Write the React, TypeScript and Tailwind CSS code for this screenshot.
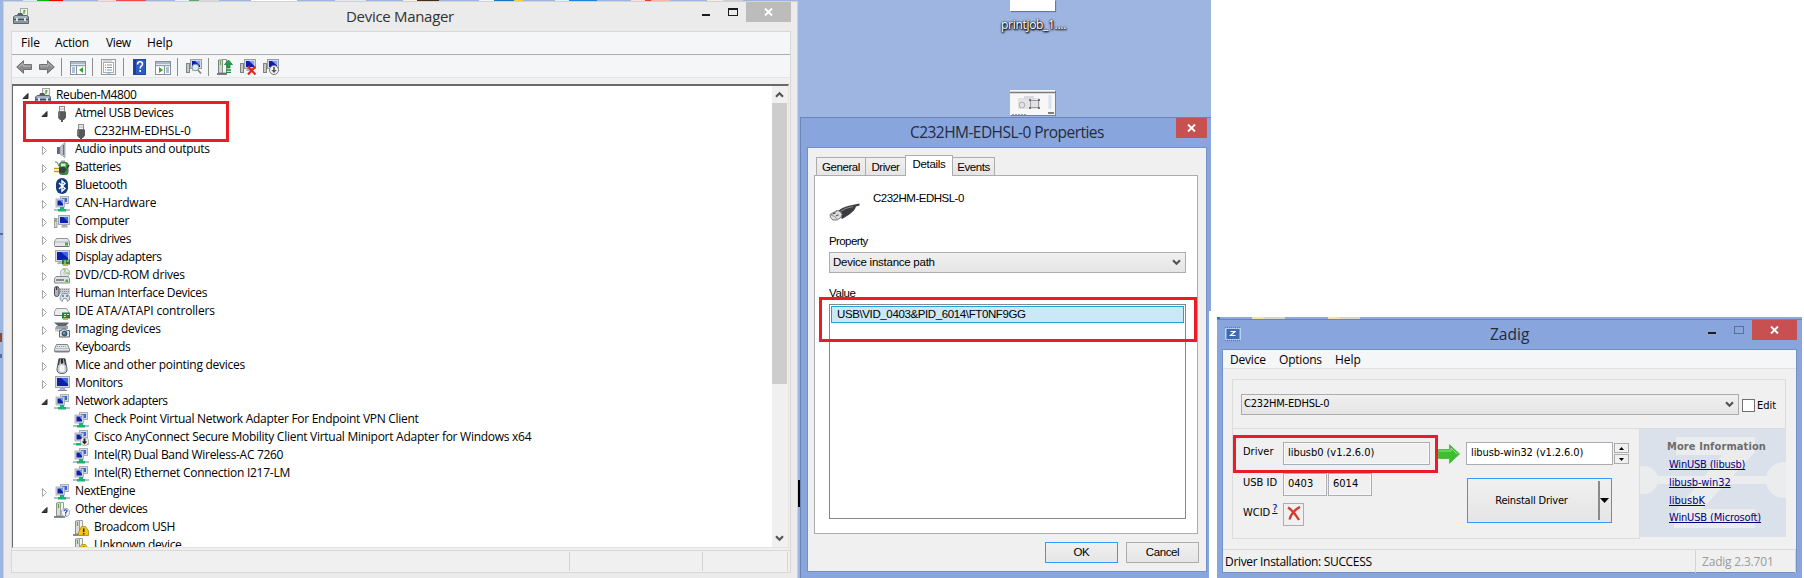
import React from "react";

const segoe = "font-['Open_Sans','Noto_Sans',sans-serif]";
const msSans = "font-['Liberation_Sans',Arial,sans-serif]";
const tahoma = "font-['DejaVu_Sans_Condensed','DejaVu_Sans',sans-serif] [font-stretch:condensed]";

type IconProps = { className?: string };

function Svg({ children, size = 16, className = "" }: { children: React.ReactNode; size?: number; className?: string }) {
  return (
    <svg width={size} height={size} viewBox="0 0 16 16" className={`shrink-0 ${className}`}>
      {children}
    </svg>
  );
}

const ComputerBoxIcon = ({ className }: IconProps) => (
  <Svg className={className}>
    <rect x="7.500" y="0.500" width="7" height="8" fill="#eef0ee" stroke="#a3a8a6" />
    <path d="M11 2v4M11 2.200l1.400 1.400" stroke="#5bb03f" strokeWidth="1.400" />
    <path d="M5 5h4l2 3H4z" fill="#555c62" />
    <path d="M0.500 9l1.500-1.500h12L15.500 9v6.500h-15z" fill="#8c98a2" stroke="#5c666e" />
    <path d="M1 11.500h14" stroke="#434b52" />
    <path d="M2 9h12" stroke="#c4ccd2" />
    <rect x="3" y="10" width="2" height="3" fill="#dfe4e8" />
    <rect x="11" y="10" width="2" height="3" fill="#dfe4e8" />
  </Svg>
);

const UsbPlugIcon = () => (
  <Svg>
    <rect x="5.500" y="0.500" width="5" height="5" fill="#f2f2f2" stroke="#8b8b8b" />
    <path d="M7 2v2M9 2v2" stroke="#b5b5b5" />
    <path d="M4 5.500h8v6l-2 2.500h-1v2h-2v-2h-1l-2-2.500z" fill="#58595b" />
    <path d="M5 6v5" stroke="#8e8f91" />
  </Svg>
);

const SpeakerIcon = () => (
  <Svg>
    <rect x="3" y="5" width="3" height="7" fill="#5f6973" />
    <path d="M6 5l5-4.500v15L6 12z" fill="#c3c9ce" stroke="#8a9299" strokeWidth=".7" />
    <path d="M9.500 3v10" stroke="#6b757e" strokeWidth="1.300" />
  </Svg>
);

const BatteryIcon = () => (
  <Svg>
    <rect x="7" y="0.500" width="4" height="2" fill="#9aa39a" />
    <rect x="5.500" y="2.500" width="8.500" height="12" rx="2" fill="#2fa43a" stroke="#4f6b50" />
    <rect x="7" y="3.500" width="4.500" height="3" fill="#d5f3d0" />
    <path d="M1 2q3-.5 3 2t2 3" stroke="#777" fill="none" />
    <path d="M5 7.500l5-1 3 3-3 4-5-1z" fill="#3c4043" />
    <path d="M0 8.500h5M0 11.500h5" stroke="#c49a1a" strokeWidth="1.500" />
    <path d="M13 8l2-3" stroke="#3c4043" strokeWidth="1.500" />
  </Svg>
);

const BluetoothIcon = () => (
  <Svg>
    <rect x="2" y="0" width="12" height="16" rx="6" fill="#123d7c" />
    <path d="M5 5l6 5.500-3 2.700V2.800l3 2.700-6 5.500" stroke="#fff" strokeWidth="1.400" fill="none" />
  </Svg>
);

function Screens() {
  return (
    <>
      <rect x="6.500" y="0.500" width="8" height="7" fill="#d9dde3" stroke="#a9adb5" />
      <rect x="8" y="2" width="5" height="4" fill="#3468e0" />
      <rect x="2" y="3" width="8.500" height="8" fill="#d5d9df" stroke="#a0a4ac" strokeWidth=".8" />
      <rect x="3.500" y="4.500" width="5.500" height="5" fill="#0d1ea8" />
      <path d="M6 4.500h3v3.500z" fill="#6a9cff" />
    </>
  );
}

const NetworkIcon = () => (
  <Svg>
    <Screens />
    <path d="M0 14h16" stroke="#b4bdc0" strokeWidth="2" />
    <path d="M6 11h4v2h2v2.500H4V13h2z" fill="#17b573" />
  </Svg>
);

const NetworkDisabledIcon = () => (
  <Svg>
    <Screens />
    <path d="M0 14h16" stroke="#b4bdc0" strokeWidth="2" />
    <path d="M3 13h5v2.500H3z" fill="#17b573" />
    <circle cx="11.500" cy="11.500" r="4.200" fill="#eee" stroke="#999" strokeWidth=".7" />
    <path d="M10.500 8.500h2v3h1.800l-2.800 3-2.800-3h1.800z" fill="#222" />
  </Svg>
);

function Monitor() {
  return (
    <>
      <rect x="1.500" y="0.500" width="14" height="11" fill="#d4d7dc" stroke="#a6a9af" />
      <rect x="3" y="2" width="11" height="8" fill="#0c1fb0" />
      <path d="M7 2h7v6z" fill="#3c6bea" />
    </>
  );
}

const MonitorIcon = () => (
  <Svg>
    <Monitor />
    <path d="M6 12h5l1 2.500H5z" fill="#b3b6bb" />
    <path d="M4 14.500h9" stroke="#8b8f95" />
  </Svg>
);

const ComputerIcon = () => (
  <Svg>
    <rect x="4.500" y="1.500" width="11" height="9" fill="#d4d7dc" stroke="#a6a9af" />
    <rect x="6" y="3" width="8" height="6" fill="#0c1fb0" />
    <path d="M9 3h5v4.500z" fill="#3c6bea" />
    <path d="M8 11h5l1 2.500H7z" fill="#a9adb3" />
    <rect x="0.500" y="4.500" width="2.500" height="9" fill="#d5dbd5" stroke="#878b8b" strokeWidth=".8" />
    <rect x="1" y="5.500" width="1.500" height="2" fill="#58b234" />
  </Svg>
);

const DiskIcon = () => (
  <Svg>
    <path d="M2.500 6.500h11l2 3v4q0 1-1 1h-13q-1 0-1-1v-4z" fill="#e6e7e9" stroke="#909397" />
    <path d="M1 10h14" stroke="#b5b7bb" />
    <path d="M1 14.500h14" stroke="#6e7175" />
    <rect x="11" y="10.500" width="3" height="3" fill="#44b02c" />
  </Svg>
);

const DisplayIcon = () => (
  <Svg>
    <Monitor />
    <path d="M4 12h4v2H3z" fill="#b3b6bb" />
    <rect x="8" y="9.500" width="8" height="5" fill="#21803c" />
    <path d="M10 11h2M13 11h2M10 13h2" stroke="#cfe9cf" />
    <rect x="9" y="14.500" width="5" height="1.500" fill="#dcae24" />
  </Svg>
);

const DvdIcon = () => (
  <Svg>
    <circle cx="11" cy="5" r="4.700" fill="#e3e8e8" stroke="#a0a5a8" strokeWidth=".8" />
    <path d="M11 5l-2-4h3zM11 5l4 2v-3z" fill="#9dd08e" />
    <circle cx="11" cy="5" r="1.200" fill="#fff" stroke="#999" strokeWidth=".6" />
    <path d="M2 8.500h12l1.500 2v4.500h-15v-4.500z" fill="#e0e1e3" stroke="#85888c" />
    <path d="M2 12h8" stroke="#4a4d50" strokeWidth="1.200" />
    <rect x="11.500" y="11.500" width="2.500" height="2.500" fill="#44b02c" />
  </Svg>
);

const HidIcon = () => (
  <Svg>
    <rect x="5" y="2" width="11" height="6" fill="#c9cdd2" />
    <path d="M6 3.500h9M6 5.500h9" stroke="#8b9098" strokeDasharray="1 1" />
    <rect x="0.500" y="0.500" width="4.500" height="10" rx="2.200" fill="#aeb3b8" stroke="#454a50" />
    <path d="M2.700 1v3" stroke="#222" />
    <path d="M6 13q0-6 5-5.500 5-.5 4.500 6.500l-2 1.500-1-3h-3l-1.500 3z" fill="#dfe3e8" stroke="#7d848b" strokeWidth=".8" />
    <circle cx="9" cy="10" r="1" fill="#2a7fc0" />
    <circle cx="13" cy="10" r="1" fill="#2a7fc0" />
  </Svg>
);

const IdeIcon = () => (
  <Svg>
    <path d="M2.500 4.500h10l2 3v4h-14v-4z" fill="#ececee" stroke="#9a9da1" />
    <path d="M1 11.500h8" stroke="#6e7175" />
    <rect x="8" y="8.500" width="8" height="6" fill="#21803c" />
    <path d="M10 10.500h2M13 10.500h2M10 12.500h2" stroke="#cfe9cf" />
    <rect x="9" y="14.500" width="5" height="1.500" fill="#dcae24" />
  </Svg>
);

const ImagingIcon = () => (
  <Svg>
    <path d="M0 0.500h15l-3 3.500H4z" fill="#5e666c" />
    <path d="M2 4h12v3H1z" fill="#9ba4aa" />
    <rect x="1" y="7" width="7" height="2.500" fill="#c6cbd0" />
    <path d="M5.500 8.500h2l1-1.500h3l1 1.500h3v6.500h-10z" fill="#dfe2e5" stroke="#60666c" />
    <circle cx="10.500" cy="11.500" r="2.500" fill="#2e6ca4" stroke="#333" strokeWidth=".7" />
    <circle cx="10" cy="11" r=".8" fill="#cfe6ff" />
  </Svg>
);

const KeyboardIcon = () => (
  <Svg>
    <path d="M2.500 4.500h11l2 5v1.500q0 1-1 1h-13q-1 0-1-1v-1.500z" fill="#e4e6e9" stroke="#7f8388" />
    <path d="M3 6.500h10M2.500 8.500h11" stroke="#8b8f95" strokeDasharray="1 1" />
    <path d="M1 11.200h14" stroke="#6a6e73" />
  </Svg>
);

const MouseIcon = () => (
  <Svg>
    <path d="M5 .7h6L13 11q.5 4.500-5 4.500T3 11z" fill="#cdd1d5" stroke="#5c6167" />
    <path d="M5.500 1l-1 6M10.500 1l1 6" stroke="#34383c" strokeWidth="1.300" />
    <rect x="6.700" y="0.800" width="2.600" height="5" rx="1" fill="#2b2e31" />
    <ellipse cx="8" cy="10.500" rx="2.500" ry="3.500" fill="#f4f5f6" />
  </Svg>
);

function Tower() {
  return (
    <>
      <path d="M2.500 1l4-.5v13.500h-4z" fill="#d9dcda" stroke="#8d908e" />
      <path d="M6.500 .5h3v13.500h-3z" fill="#f1f2f1" stroke="#9b9e9c" />
      <path d="M4.500 2v4" stroke="#55b030" strokeWidth="1.200" />
      <path d="M0 15h11" stroke="#55585a" strokeWidth="1.400" />
    </>
  );
}

const OtherIcon = () => (
  <Svg>
    <Tower />
    <circle cx="11.500" cy="10.500" r="4.200" fill="#eef2fa" stroke="#8f98a8" strokeWidth=".8" />
    <path d="M10 9.300q.2-1.600 1.600-1.500 1.500.1 1.400 1.300 0 .8-1.400 1.700v.9M11.600 12.600v1.200" stroke="#2448c4" strokeWidth="1.200" fill="none" />
  </Svg>
);

const WarningIcon = () => (
  <Svg>
    <Tower />
    <path d="M8.500 6.500h4l3 4.500v4.500h-10v-3z" fill="#f5c518" stroke="#b08a0a" strokeWidth=".8" />
    <path d="M10.700 8.500v3.500M10.700 13v1.400" stroke="#222" strokeWidth="1.500" />
  </Svg>
);

type Row = { level: 0 | 1 | 2; open?: boolean; icon: React.ComponentType; label: string; track: string };

const rows: Row[] = [
  { level: 0, open: true, icon: ComputerBoxIcon, label: "Reuben-M4800", track: "tracking-[-0.38px]" },
  { level: 1, open: true, icon: UsbPlugIcon, label: "Atmel USB Devices", track: "tracking-[-0.38px]" },
  { level: 2, icon: UsbPlugIcon, label: "C232HM-EDHSL-0", track: "tracking-[-0.2px]" },
  { level: 1, icon: SpeakerIcon, label: "Audio inputs and outputs", track: "tracking-[-0.3px]" },
  { level: 1, icon: BatteryIcon, label: "Batteries", track: "tracking-[-0.5px]" },
  { level: 1, icon: BluetoothIcon, label: "Bluetooth", track: "tracking-[-0.35px]" },
  { level: 1, icon: NetworkIcon, label: "CAN-Hardware", track: "tracking-[-0.18px]" },
  { level: 1, icon: ComputerIcon, label: "Computer", track: "tracking-[-0.3px]" },
  { level: 1, icon: DiskIcon, label: "Disk drives", track: "tracking-[-0.42px]" },
  { level: 1, icon: DisplayIcon, label: "Display adapters", track: "tracking-[-0.42px]" },
  { level: 1, icon: DvdIcon, label: "DVD/CD-ROM drives", track: "tracking-[-0.22px]" },
  { level: 1, icon: HidIcon, label: "Human Interface Devices", track: "tracking-[-0.35px]" },
  { level: 1, icon: IdeIcon, label: "IDE ATA/ATAPI controllers", track: "tracking-[-0.15px]" },
  { level: 1, icon: ImagingIcon, label: "Imaging devices", track: "tracking-[-0.22px]" },
  { level: 1, icon: KeyboardIcon, label: "Keyboards", track: "tracking-[-0.45px]" },
  { level: 1, icon: MouseIcon, label: "Mice and other pointing devices", track: "tracking-[-0.26px]" },
  { level: 1, icon: MonitorIcon, label: "Monitors", track: "tracking-[-0.35px]" },
  { level: 1, open: true, icon: NetworkIcon, label: "Network adapters", track: "tracking-[-0.5px]" },
  { level: 2, icon: NetworkIcon, label: "Check Point Virtual Network Adapter For Endpoint VPN Client", track: "tracking-[-0.28px]" },
  { level: 2, icon: NetworkDisabledIcon, label: "Cisco AnyConnect Secure Mobility Client Virtual Miniport Adapter for Windows x64", track: "tracking-[-0.27px]" },
  { level: 2, icon: NetworkIcon, label: "Intel(R) Dual Band Wireless-AC 7260", track: "tracking-[-0.31px]" },
  { level: 2, icon: NetworkIcon, label: "Intel(R) Ethernet Connection I217-LM", track: "tracking-[-0.27px]" },
  { level: 1, icon: NetworkIcon, label: "NextEngine", track: "tracking-[-0.4px]" },
  { level: 1, open: true, icon: OtherIcon, label: "Other devices", track: "tracking-[-0.35px]" },
  { level: 2, icon: WarningIcon, label: "Broadcom USH", track: "tracking-[-0.35px]" },
  { level: 2, icon: WarningIcon, label: "Unknown device", track: "tracking-[-0.35px]" },
];

const indents = { 0: "pl-[9px]", 1: "pl-[28px]", 2: "pl-[47px]" };

function Expander({ row }: { row: Row }) {
  if (row.level === 2) return <span className="w-[13px] shrink-0" />;
  return (
    <svg width="13" height="18" viewBox="0 0 13 18" className="shrink-0">
      {row.open ? (
        <path d="M6 7.500v5H1z" fill="#404040" stroke="#262626" />
      ) : (
        <path d="M1.500 6.500l4 4-4 4z" fill="#fff" stroke="#a6a6a6" />
      )}
    </svg>
  );
}

function TreeRow({ row }: { row: Row }) {
  const Icon = row.icon;
  return (
    <div className={`flex h-[18px] shrink-0 items-center ${indents[row.level]}`}>
      <Expander row={row} />
      <span className="mt-[2px] mr-[5px] h-4 w-4"><Icon /></span>
      <span className={`text-[12px] leading-[18px] whitespace-pre text-black ${row.track}`}>{row.label}</span>
    </div>
  );
}

const Sep = ({ className = "" }: IconProps) => <span className={`h-[18px] w-px bg-[#8d8d8d] ${className}`} />;

const Arrow = ({ flip, className = "" }: { flip?: boolean; className?: string }) => (
  <Svg className={`${flip ? "-scale-x-100" : ""} ${className}`}>
    <path d="M.7 8L7.500 1.700v3.800H15.500v5H7.500v3.800z" fill="#8c8c8c" stroke="#686868" strokeWidth=".9" />
    <path d="M3 8l4-3.700v2.700h8" stroke="#b9b9b9" fill="none" />
  </Svg>
);

const PaneIcon = ({ flip, className = "" }: { flip?: boolean; className?: string }) => (
  <Svg className={className}>
    <rect x="0.500" y="1.500" width="15" height="13" fill="#fff" stroke="#84909c" />
    <path d="M1 3h14M1 5.500h14" stroke="#93a1b0" strokeWidth="1.300" />
    <path d={flip ? "M9.500 6v8" : "M6.500 6v8"} stroke="#84909c" />
    <path d={flip ? "M11 8h3M11 10h3M11 12h3" : "M2 8h3M2 10h3M2 12h3"} stroke="#5d7fa3" />
    <path d={flip ? "M4 7l4 3-4 3z" : "M13 7v6l-4-3z"} fill="#35a829" />
  </Svg>
);

const PropertiesIcon = ({ className = "" }: IconProps) => (
  <Svg className={className}>
    <rect x="0.500" y="0.500" width="14" height="15" fill="#f7f7f7" stroke="#9b9b9b" />
    <rect x="2.500" y="3.500" width="10" height="10" fill="#fff" stroke="#a8b0b8" />
    <path d="M2 2h9" stroke="#b9b9b9" />
    <path d="M4 6h1M6 6h5M4 8.500h1M6 8.500h5M4 11h1M6 11h5" stroke="#8c8c8c" />
    <path d="M6 14h4" stroke="#58b7d8" />
  </Svg>
);

const HelpIcon = ({ className = "" }: IconProps) => (
  <svg width="13" height="16" viewBox="0 0 13 16" className={`shrink-0 ${className}`}>
    <rect x=".5" y=".5" width="12" height="15" fill="#2c5cc5" stroke="#244796" />
    <path d="M1 1h2v14H1z" fill="#1d3f94" />
    <path d="M4.500 5.500q0-2.700 2.500-2.700t2.500 2.200q0 1.300-1.300 2.200-1 .8-1 2.300M7.200 11v2" stroke="#fff" strokeWidth="1.600" fill="none" />
  </svg>
);

function DevicePc() {
  return (
    <>
      <rect x="4.500" y="0.500" width="11" height="9" fill="#d4d7dc" stroke="#9a9da3" />
      <rect x="6" y="2" width="8" height="6" fill="#0c1fb0" />
      <path d="M9 2h5v4.500z" fill="#7ea2f5" />
      <path d="M7 10h5v2H6z" fill="#a9adb3" />
      <rect x="0.500" y="4.500" width="3" height="9" fill="#c5c8c8" stroke="#7f8383" />
    </>
  );
}

const ScanIcon = ({ className = "" }: IconProps) => (
  <Svg className={className}>
    <DevicePc />
    <circle cx="9.500" cy="8.500" r="3.300" fill="#d9edfc" stroke="#8796a8" />
    <path d="M12 11l3 3.500" stroke="#7d8790" strokeWidth="1.800" />
  </Svg>
);

const UpdateIcon = ({ className = "" }: IconProps) => (
  <Svg className={className}>
    <path d="M1.500 1h4v13h-4z" fill="#d3d6d3" stroke="#7d807d" />
    <path d="M5.500 .5h4v13.500h-4z" fill="#f3f4f3" stroke="#8d908d" />
    <path d="M3.500 2v4" stroke="#62b846" strokeWidth="1.200" />
    <path d="M0 15h10" stroke="#55585a" strokeWidth="1.500" />
    <path d="M11.500 1l4 4.500h-2.500v3.500h-3V5.500H7.500z" fill="#22a347" stroke="#0c7a2b" strokeWidth=".7" />
    <path d="M9 11h5M9 13.300h5" stroke="#1b8f3b" strokeWidth="1.300" />
  </Svg>
);

const UninstallIcon = ({ className = "" }: IconProps) => (
  <Svg className={className}>
    <DevicePc />
    <path d="M8 7.500l7.500 8M15.500 7.500l-7.500 8" stroke="#e2261d" strokeWidth="2.200" />
  </Svg>
);

const DisableIcon = ({ className = "" }: IconProps) => (
  <Svg className={className}>
    <DevicePc />
    <circle cx="11" cy="11" r="4.500" fill="#f3f3f3" stroke="#777" />
    <path d="M10.200 8h1.600v3h1.900L11 14l-2.700-3h1.900z" fill="#555" />
  </Svg>
);

const Chevron = ({ up, className = "" }: { up?: boolean; className?: string }) => (
  <svg width="9" height="7" viewBox="0 0 9 7" className={`shrink-0 ${up ? "rotate-180" : ""} ${className}`}>
    <path d="M1 1.200l3.500 3.500L8 1.200" stroke="#555" strokeWidth="2.200" fill="none" />
  </svg>
);

const CloseX = () => (
  <svg width="9" height="8" viewBox="0 0 9 8">
    <path d="M1 .5l7 7M8 .5l-7 7" stroke="#fff" strokeWidth="1.900" />
  </svg>
);

function DeviceManager() {
  return (
    <section className={`absolute top-[1px] left-[3px] flex h-[577px] w-[795px] flex-col border border-b-0 border-[#d2d2d2] bg-[#ebebeb] ${segoe}`}>
      <header className="flex h-[29px] shrink-0 pl-[9px]">
        <ComputerBoxIcon className="mt-[6px]" />
        <h1 className="ml-[317px] w-[115px] text-[15px] leading-[28px] whitespace-nowrap text-[#333] tracking-[-0.3px]">Device Manager</h1>
        <span className="mt-[12px] ml-[241px] h-[2px] w-[8px] bg-[#1c1c1c]" />
        <span className="mt-[6px] ml-[18px] h-[8px] w-[10px] border border-t-2 border-[#1c1c1c]" />
        <span className="ml-[8px] flex h-[20px] w-[45px] items-center justify-center bg-[#bcbcbc]"><CloseX /></span>
      </header>
      <div className="ml-[7px] flex h-[542px] w-[780px] shrink-0 flex-col border border-[#d8d8d8] bg-[#f0f0f0]">
        <nav className="flex h-[23px] shrink-0 items-center border-b border-[#adadad] bg-[#f5f6f8] pl-[9px] text-[12px] text-black">
          <span className="w-[34px]">File</span>
          <span className="w-[51px] tracking-[-0.2px]">Action</span>
          <span className="w-[41px] tracking-[-0.4px]">View</span>
          <span>Help</span>
        </nav>
        <div className="flex h-[23px] shrink-0 items-center border-b border-[#e2e4e7] bg-[#f5f6f8] pt-px pl-[4px]">
          <Arrow />
          <Arrow flip className="ml-[7px]" />
          <Sep className="ml-[6px]" />
          <PaneIcon className="mt-[2px] ml-[8px]" />
          <Sep className="ml-[6px]" />
          <PropertiesIcon className="ml-[8px]" />
          <Sep className="ml-[6px]" />
          <HelpIcon className="ml-[9px]" />
          <PaneIcon flip className="mt-[2px] ml-[9px]" />
          <Sep className="ml-[6px]" />
          <ScanIcon className="ml-[8px]" />
          <Sep className="ml-[6px]" />
          <UpdateIcon className="ml-[8px]" />
          <UninstallIcon className="ml-[7px]" />
          <DisableIcon className="ml-[7px]" />
        </div>
        <div className="mt-[6px] flex h-[464px] w-[777px] shrink-0 overflow-hidden border border-t-2 border-[#e3e3e3] border-t-[#696969] border-l-[#696969] bg-white">
          <div className="flex flex-1 flex-col overflow-hidden">
            {rows.map((row, i) => <TreeRow key={i} row={row} />)}
          </div>
          <div className="flex w-[16px] flex-col items-center bg-[#f0f0f0] pr-px">
            <Chevron up className="mt-[5px] mb-[5px]" />
            <div className="h-[281px] w-full bg-[#cdcdcd]" />
            <Chevron className="mt-auto mb-[5px]" />
          </div>
        </div>
        <footer className="mt-[2px] flex flex-1 border-t border-[#d8d8d8] py-px">
          <span className="w-[558px] border-r border-[#d4d4d4]" />
          <span className="w-[133px] border-r border-[#d4d4d4]" />
          <span className="w-[85px] border-r border-[#d4d4d4]" />
        </footer>
      </div>
    </section>
  );
}

const UsbConnector = () => (
  <svg width="32" height="18" viewBox="0 0 32 18" className="shrink-0">
    <path d="M9 8Q13 4 21 2.500L30.500.5v2L27 3.500Q26 8 18 13l-5 3z" fill="#3d3b40" />
    <path d="M12 8Q16 5 24 3.500" stroke="#8d8c90" fill="none" />
    <path d="M1 11.500l7-4q4 0 5 4l-1 3-4 2.500H4Q.5 15 1 11.500z" fill="#dedede" stroke="#6e6e6e" strokeWidth=".9" />
    <path d="M2 12q5 1 6 4.500M8 8l-6 4" stroke="#888" strokeWidth=".8" fill="none" />
    <path d="M4 11l2.500-1.300M7 13l2.500-1.300" stroke="#555" strokeWidth="1.200" />
  </svg>
);

const tabBase = "mt-[2px] h-[18px] border border-r-0 border-b-0 border-[#acacac] bg-gradient-to-b from-[#f0f0f0] to-[#e5e5e5] text-center leading-[18px]";

function PropertiesWindow() {
  return (
    <section className={`absolute top-[117px] left-[800px] flex h-[461px] w-[411px] flex-col border-t border-l border-[#6b85b8] bg-[#88a5dd] text-black ${msSans}`}>
      <header className={`flex h-[29px] shrink-0 ${segoe}`}>
        <h2 className="ml-[109px] w-[220px] text-[15.5px] leading-[29px] whitespace-nowrap text-[#222c3e] tracking-[-0.55px]">C232HM-EDHSL-0 Properties</h2>
        <span className="ml-[46px] flex h-[20px] w-[31px] items-center justify-center bg-[#c75050]"><CloseX /></span>
      </header>
      <div className="ml-[6px] flex h-[425px] w-[400px] shrink-0 flex-col border border-[#7390c4] bg-[#f0f0f0] text-[11.5px]">
        <div className="mt-[7px] ml-[8px] flex h-[20px] shrink-0 tracking-[-0.45px]">
          <span className={`${tabBase} w-[49px]`}>General</span>
          <span className={`${tabBase} w-[40px]`}>Driver</span>
          <span className="relative h-[21px] w-[48px] border border-b-0 border-[#acacac] bg-white text-center leading-[17px] tracking-[-0.3px]">Details</span>
          <span className={`${tabBase} w-[41px] border-l-0`}>Events</span>
          <span className="mt-[2px] h-[18px] w-px bg-[#acacac]" />
        </div>
        <div className="ml-[6px] flex h-[359px] w-[384px] shrink-0 flex-col border border-[#acacac] bg-white pl-[14px]">
          <div className="flex h-[57px] shrink-0">
            <span className="mt-[27px]"><UsbConnector /></span>
            <span className="mt-[15px] ml-[12px] leading-[15px] tracking-[-0.5px]">C232HM-EDHSL-0</span>
          </div>
          <span className="mb-[3px] leading-[16px] tracking-[-0.6px]">Property</span>
          <div className="flex h-[21px] w-[357px] shrink-0 items-center justify-between border border-[#acacac] bg-gradient-to-b from-[#f0f0f0] to-[#e5e5e5] pr-[4px] pl-[3px]">
            <span className="tracking-[-0.25px]">Device instance path</span>
            <Chevron />
          </div>
          <span className="mt-[12px] mb-[3px] leading-[16px] tracking-[-0.4px]">Value</span>
          <div className="h-[215px] w-[357px] border border-[#828790] p-px">
            <div className="h-[17px] border border-[#26a0da] bg-[#cbe8f6] pl-[5px] leading-[15px] tracking-[-0.38px]">USB\VID_0403&amp;PID_6014\FT0NF9GG</div>
          </div>
        </div>
        <div className="mt-[8px] mr-[7px] flex justify-end gap-[8px] tracking-[-0.4px]">
          <span className="h-[21px] w-[73px] border border-[#3399ff] bg-gradient-to-b from-[#f0f0f0] to-[#e5e5e5] text-center leading-[19px]">OK</span>
          <span className="h-[21px] w-[73px] border border-[#acacac] bg-gradient-to-b from-[#f0f0f0] to-[#e5e5e5] text-center leading-[19px]">Cancel</span>
        </div>
      </div>
    </section>
  );
}

const ZadigIcon = () => (
  <Svg>
    <rect x="0" y="2" width="16" height="12" fill="#bcd2ee" />
    <path d="M0 1.500h16M0 14.500h16" stroke="#5b7fae" strokeWidth="1.500" strokeDasharray="1 1" />
    <rect x="1.500" y="3" width="13" height="10" fill="#3c6cae" />
    <path d="M5.500 5.500h4.500l-4.500 4h5" stroke="#fff" strokeWidth="1.200" fill="none" />
  </Svg>
);

function ZadigPanel() {
  return (
    <div className="relative h-[108px] w-[146px] overflow-hidden bg-[#dbe1ea]">
      <svg width="146" height="108" viewBox="0 0 146 108" className="absolute inset-0">
        <g fill="#ebecee">
          <circle cx="4" cy="51" r="14" />
          <circle cx="144" cy="51" r="18" />
          <rect x="10" y="47" width="118" height="8" />
          <path d="M36 8h79v15L62 80h53v19H34V84L82 26H36z" />
        </g>
      </svg>
      <div className="relative flex flex-col pt-[9px] pl-[29px] leading-[18px]">
        <b className="-ml-[2px] whitespace-nowrap text-[#6d6d6d] tracking-[0.1px]">More Information</b>
        <a className="whitespace-nowrap text-[#000080] underline tracking-[-0.2px]">WinUSB (libusb)</a>
        <a className="text-[#000080] underline tracking-[-0.1px]">libusb-win32</a>
        <a className="text-[#000080] underline">libusbK</a>
        <a className="-mt-px whitespace-nowrap text-[#000080] underline tracking-[-0.15px]">WinUSB (Microsoft)</a>
      </div>
    </div>
  );
}

const field = "border border-[#abadb3] pl-[4px] leading-[19px] shadow-[inset_0_0_0_1px_#f8f8f8]";

function ZadigWindow() {
  return (
    <section className={`absolute top-[319px] left-[1217px] flex h-[259px] w-[585px] flex-col border-t border-[#6b85b8] bg-[#88a5dd] text-black ${segoe}`}>
      <header className="flex h-[29px] shrink-0 pl-[8px]">
        <span className="mt-[6px]"><ZadigIcon /></span>
        <h2 className="ml-[249px] w-[42px] text-[15.5px] leading-[29px] text-[#222c3e]">Zadig</h2>
        <span className="mt-[12px] ml-[176px] h-[2px] w-[8px] bg-[#1c1c1c]" />
        <span className="mt-[6px] ml-[18px] h-[8px] w-[10px] border border-[#5c6f96]" />
        <span className="ml-[8px] flex h-[20px] w-[45px] items-center justify-center bg-[#c75050]"><CloseX /></span>
      </header>
      <div className="ml-[5px] flex h-[224px] w-[575px] shrink-0 flex-col border border-[#7390c4] bg-[#f0f0f0]">
        <nav className="flex h-[19px] shrink-0 items-center border-b border-[#e2e2e2] bg-[#f5f6f8] pt-px pl-[7px] text-[12px]">
          <span className="w-[49px] tracking-[-0.2px]">Device</span>
          <span className="w-[56px] tracking-[-0.2px]">Options</span>
          <span>Help</span>
        </nav>
        <div className={`mt-[10px] ml-[9px] flex h-[50px] w-[554px] shrink-0 border border-[#dcdcdc] text-[11px] ${tahoma}`}>
          <div className="mt-[14px] ml-[8px] flex h-[21px] w-[498px] items-center justify-between border border-[#acacac] bg-gradient-to-b from-[#f0f0f0] to-[#e5e5e5] pr-[4px] pl-[2px]">
            <span className="tracking-[-0.2px]">C232HM-EDHSL-0</span>
            <Chevron />
          </div>
          <span className="mt-[19px] ml-[3px] h-[13px] w-[13px] border border-[#707070] bg-white" />
          <span className="mt-[18px] ml-[2px] leading-[16px]">Edit</span>
        </div>
        <div className={`ml-[9px] flex h-[110px] shrink-0 text-[11px] ${tahoma}`}>
          <div className="flex w-[408px] border border-t-0 border-[#dcdcdc] pt-[13px] pl-[10px]">
            <div className="flex w-[40px] flex-col">
              <span className="h-[31px] leading-[20px]">Driver</span>
              <span className="h-[30px] leading-[20px] whitespace-nowrap">USB ID</span>
              <span className="flex leading-[20px]">WCID<u className="-mt-[4px] ml-[2px] text-[#000080]">?</u></span>
            </div>
            <div className="flex w-[183px] flex-col">
              <div className="flex h-[31px]">
                <span className={`h-[23px] w-[147px] tracking-[-0.05px] ${field}`}>libusb0 (v1.2.6.0)</span>
                <svg width="22" height="20" viewBox="0 0 22 20" className="mt-[2px] ml-[8px]">
                  <path d="M.5 5.500h11V.7l10 9.300-10 9.300v-4.800H.5z" fill="#3dc02d" stroke="#57b94c" />
                  <path d="M1 7h12V4l6 6" stroke="#8ee57e" fill="none" />
                </svg>
              </div>
              <div className="flex h-[30px] gap-px">
                <span className={`h-[23px] w-[44px] ${field}`}>0403</span>
                <span className={`h-[23px] w-[44px] ${field}`}>6014</span>
              </div>
              <span className="h-[23px] w-[21px] border border-[#abadb3] pt-[2px] pl-[3px]">
                <svg width="15" height="15" viewBox="0 0 15 15">
                  <path d="M1 1.500q6 4 11 12.500M13 1Q5 5 2.500 13.500" stroke="#d63a28" strokeWidth="2.400" fill="none" />
                </svg>
              </span>
            </div>
            <div className="flex w-[164px] flex-col">
              <div className="flex">
                <span className="h-[23px] w-[147px] border border-[#abadb3] bg-white pl-[4px] leading-[19px] tracking-[-0.08px]">libusb-win32 (v1.2.6.0)</span>
                <div className="mt-px ml-px flex flex-col gap-px">
                  <span className="flex h-[10px] w-[15px] items-center justify-center border border-[#acacac]"><svg width="5" height="3"><path d="M0 3L2.500 0 5 3z" /></svg></span>
                  <span className="flex h-[10px] w-[15px] items-center justify-center border border-[#acacac]"><svg width="5" height="3"><path d="M0 0L2.500 3 5 0z" /></svg></span>
                </div>
              </div>
              <div className="mt-[13px] ml-px flex h-[45px] w-[145px] items-center border border-[#3399ff] bg-gradient-to-b from-[#f0f0f0] to-[#e5e5e5]">
                <span className="w-[130px] pr-[3px] text-center leading-[16px] tracking-[-0.2px]">Reinstall Driver</span>
                <span className="h-[39px] w-[2px] bg-[#8a8a8a]" />
                <svg width="9" height="5" className=""><path d="M0 0h9L4.500 5z" /></svg>
              </div>
            </div>
          </div>
          <ZadigPanel />
        </div>
        <footer className="mt-[10px] flex flex-1 border-t border-[#d8d8d8] text-[12px] leading-[23px]">
          <span className="w-[473px] border-r border-[#d4d4d4] pl-[2px] tracking-[-0.33px]">Driver Installation: SUCCESS</span>
          <span className="w-[100px] border-r border-[#d4d4d4] pl-[6px] text-[#9b9b9b] tracking-[-0.2px]">Zadig 2.3.701</span>
        </footer>
      </div>
    </section>
  );
}

const Mark = ({ className }: IconProps) => <div className={`absolute border-[3px] border-[#ed1c24] ${className}`} />;

const slivers = [
  "left-[23px] w-[14px] bg-[#d9eaf8]", "left-[37px] w-[12px] bg-[#12b012]", "left-[49px] w-[14px] bg-[#f00000]",
  "left-[98px] w-[18px] bg-[#f9d9d9]", "left-[116px] w-[30px] bg-[#f04a4a]", "left-[175px] w-[14px] bg-[#e3f1fb]",
  "left-[189px] w-[10px] bg-[#5aa86e]", "left-[199px] w-[20px] bg-[#d9d9d9]", "left-[251px] w-[46px] bg-white",
  "left-[335px] w-[31px] bg-[#e3e6ef]", "left-[403px] w-[14px] bg-[#f5f0e0]", "left-[417px] w-[22px] bg-[#4a2c14]",
  "left-[479px] w-[15px] bg-[#eef5fc]", "left-[494px] w-[20px] bg-[#1b76bd]", "left-[514px] w-[9px] bg-[#f5cf3c]",
  "left-[555px] w-[14px] bg-[#dff2fd]", "left-[569px] w-[28px] bg-[#1d83dd]", "left-[631px] w-[14px] bg-[#f9e0dc]",
  "left-[645px] w-[6px] bg-[#d64526]", "left-[652px] w-[18px] bg-[#f5b99c]", "left-[707px] w-[16px] bg-[#f3efdf]",
  "left-[723px] w-[20px] bg-[#cfcfcf]",
];

export default function App() {
  return (
    <main className="relative h-[578px] w-[1804px] overflow-hidden bg-white">
      <div className="absolute top-0 left-0 h-[578px] w-[1209px] bg-[#9fb5e1]" />
      <div className="absolute top-0 left-[1209px] h-[311px] w-[2px] bg-[#9fb5e1]" />
      {slivers.map((s) => <span key={s} className={`absolute top-0 h-[1px] ${s}`} />)}
      <span className="absolute top-[233px] left-0 h-[2px] w-[3px] bg-[#5b6b96]" />
      <span className="absolute top-[333px] left-0 h-[9px] w-[2px] bg-[#8c4a2c]" />
      <span className="absolute top-[354px] left-0 h-[4px] w-[2px] bg-[#5b6b96]" />
      <span className="absolute top-[480px] left-[798px] h-[27px] w-[2px] bg-black" />

      <div className="absolute top-0 left-[1010px] h-[11px] w-[45px] bg-white shadow-[1px_1px_1px_#6478a5]" />
      <span className={`absolute top-[16px] left-[1001px] text-[12px] leading-[18px] whitespace-nowrap text-white tracking-[-0.3px] [text-shadow:1px_1px_2px_#000,0_1px_2px_#000,0_0_2px_#000] ${segoe}`}>printjob_1....</span>
      <svg width="47" height="27" viewBox="0 0 47 27" className="absolute top-[90px] left-[1010px]">
        <rect x="1" y="1" width="45" height="25" fill="#6f82ab" />
        <rect x="0" y="0" width="45" height="25" fill="#f7f7f7" />
        <path d="M0 2.500h45" stroke="#77797d" strokeWidth="1.400" />
        <rect x="8" y="8" width="22" height="11" fill="#e3e3e5" />
        <rect x="14" y="6" width="10" height="3" fill="#d9d9db" />
        <circle cx="12" cy="15" r="2.800" fill="none" stroke="#b0b0b0" />
        <rect x="20.500" y="10.500" width="8" height="7" fill="#e2e2e6" stroke="#9a9aa0" />
        <path d="M20 9v2M29 9v2M20 17v2M29 17v2" stroke="#55555c" strokeWidth="1.500" />
        <path d="M38 23h6" stroke="#555" strokeWidth="1.500" />
        <path d="M2 24.500h14" stroke="#9a9a9a" strokeDasharray="2 1" />
        <path d="M40 5v14" stroke="#d7e3ee" strokeWidth="3" />
      </svg>

      <DeviceManager />
      <PropertiesWindow />
      <div className="absolute top-[311px] left-[1209px] h-[267px] w-[2px] bg-white" />

      <div className="absolute top-[317px] left-[1217px] h-[2px] w-[585px] bg-[#8fa8da]" />
      <span className="absolute top-[317px] left-[1217px] h-[2px] w-[3px] bg-[#0a84d8]" />
      <span className="absolute top-[317px] left-[1252px] h-[2px] w-[12px] bg-[#f3e2a0]" />
      <span className="absolute top-[317px] left-[1264px] h-[2px] w-[21px] bg-[#d8d4cc]" />
      <span className="absolute top-[317px] left-[1328px] h-[2px] w-[12px] bg-[#f3e2a0]" />
      <span className="absolute top-[317px] left-[1340px] h-[2px] w-[20px] bg-[#d8d4cc]" />
      <ZadigWindow />

      <Mark className="top-[101px] left-[23px] h-[41px] w-[206px]" />
      <Mark className="top-[297px] left-[819px] h-[45px] w-[378px]" />
      <Mark className="top-[435px] left-[1233px] h-[38px] w-[205px]" />
    </main>
  );
}
